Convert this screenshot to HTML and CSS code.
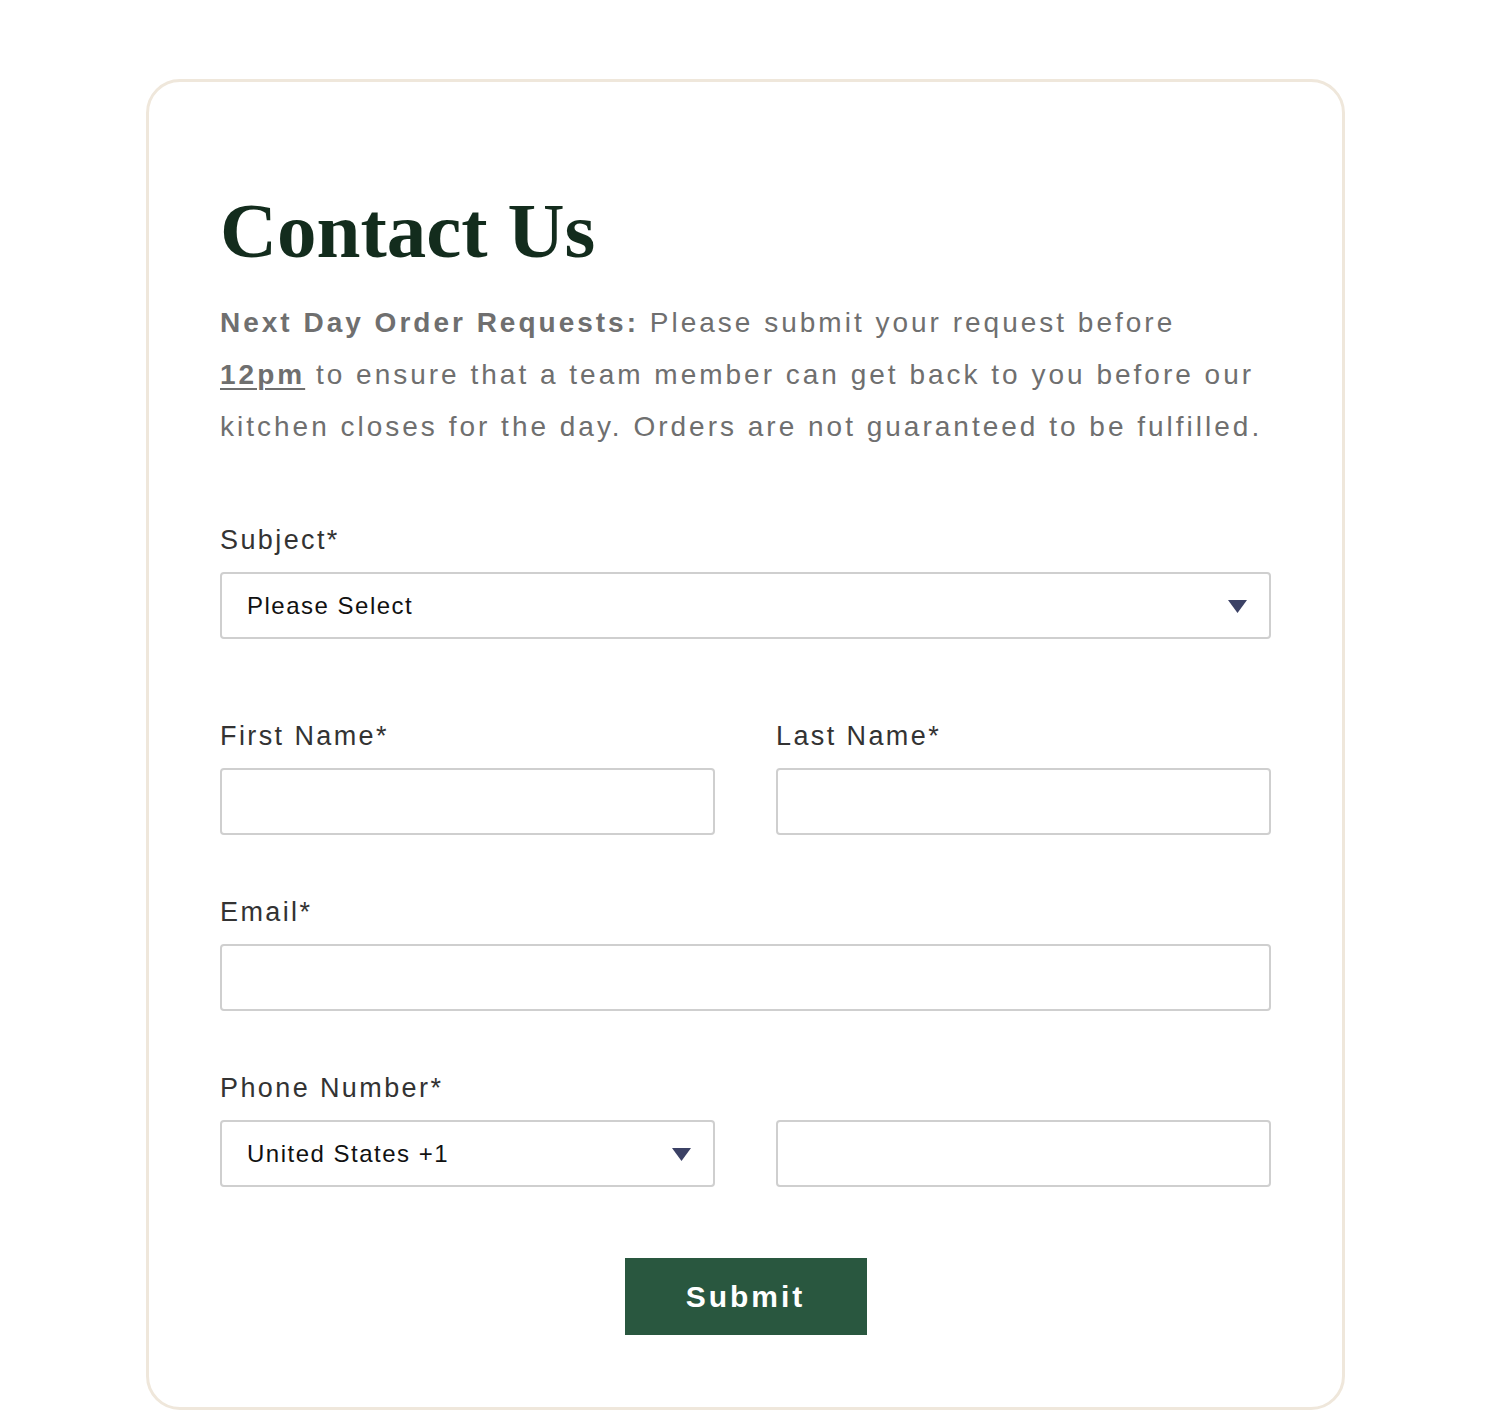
FILE: index.html
```html
<!DOCTYPE html>
<html lang="en">
<head>
<meta charset="utf-8">
<title>Contact Us</title>
<link rel="stylesheet" href="styles.css">
</head>
<body>
<div class="card">
  <h1 class="title">Contact Us</h1>
  <p class="intro"><strong>Next Day Order Requests:</strong> Please submit your request before <strong class="u">12pm</strong> to ensure that a team member can get back to you before our kitchen closes for the day. Orders are not guaranteed to be fulfilled.</p>
  <form class="form">
    <div class="field field-subject">
      <label class="label">Subject*</label>
      <div class="select">
        <span class="select-text">Please Select</span>
        <svg class="arrow" width="19" height="13" viewBox="0 0 19 13"><path d="M0 0H19L9.5 13Z" fill="#3b4165"/></svg>
      </div>
    </div>
    <div class="row">
      <div class="field">
        <label class="label">First Name*</label>
        <div class="input"></div>
      </div>
      <div class="field">
        <label class="label">Last Name*</label>
        <div class="input"></div>
      </div>
    </div>
    <div class="field">
      <label class="label">Email*</label>
      <div class="input"></div>
    </div>
    <div class="field">
      <label class="label">Phone Number*</label>
      <div class="row">
        <div class="select">
          <span class="select-text">United States +1</span>
          <svg class="arrow" width="19" height="13" viewBox="0 0 19 13"><path d="M0 0H19L9.5 13Z" fill="#3b4165"/></svg>
        </div>
        <div class="input"></div>
      </div>
    </div>
    <div class="actions">
      <button type="button" class="submit">Submit</button>
    </div>
  </form>
</div>
</body>
</html>
```
FILE: styles.css
```css
html, body {
  margin: 0;
  padding: 0;
  background: #ffffff;
}
body {
  font-family: "Liberation Sans", Arial, sans-serif;
}
.card {
  box-sizing: border-box;
  width: 1199px;
  margin: 79px 0 18px 146px;
  border: 3px solid #efe7db;
  border-radius: 34px;
  padding: 101px 71px 72px 71px;
}
.title {
  margin: 0;
  font-family: "Liberation Serif", "Times New Roman", serif;
  font-weight: 700;
  font-size: 79px;
  line-height: 96px;
  color: #132c1d;
}
.intro {
  margin: 18px 0 0 0;
  max-width: 1045px;
  font-size: 28px;
  line-height: 52px;
  letter-spacing: 3px;
  color: #6f6f6f;
}
.intro strong {
  font-weight: 700;
}
.intro .u {
  text-decoration: underline;
  text-underline-offset: 4px;
  text-decoration-thickness: 2px;
}
.form {
  margin-top: 68px;
  display: flex;
  flex-direction: column;
  gap: 58px;
}
.field {
  display: flex;
  flex-direction: column;
  gap: 15px;
}
.field-subject {
  margin-bottom: 20px;
}
.label {
  font-size: 27px;
  line-height: 36px;
  letter-spacing: 2.4px;
  color: #333333;
  padding-top: 1px;
  margin-bottom: -1px;
}
.row {
  display: grid;
  grid-template-columns: 1fr 1fr;
  column-gap: 61px;
}
.select, .input {
  box-sizing: border-box;
  height: 67px;
  border: 2px solid #cfcfcf;
  border-radius: 4px;
  background: #fff;
}
.select {
  display: flex;
  align-items: center;
  justify-content: space-between;
  padding: 0 22px 0 25px;
}
.select-text {
  font-size: 24px;
  letter-spacing: 1.5px;
  color: #111111;
}
.arrow {
  display: block;
  margin-top: 2px;
}
.actions {
  display: flex;
  justify-content: center;
  margin-top: 13px;
}
.submit {
  width: 242px;
  height: 77px;
  border: 0;
  border-radius: 0;
  background: #29573f;
  color: #ffffff;
  font-family: "Liberation Sans", Arial, sans-serif;
  font-weight: 700;
  font-size: 30px;
  letter-spacing: 3px;
  padding: 0;
  cursor: pointer;
}
```
